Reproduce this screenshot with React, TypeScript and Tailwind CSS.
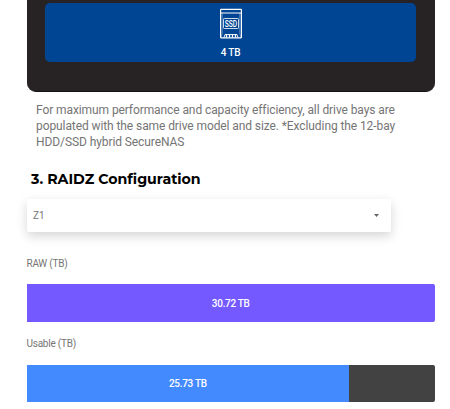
interface CapacityBarProps {
  label: string
  value: string
  percent: number
  color: string
}

function SsdIcon() {
  return (
    <svg width="22" height="31" viewBox="0 0 22 31" fill="none" stroke="white">
      <rect x="0.6" y="1.4" width="20.8" height="28.4" rx="0.5" strokeWidth="1.2" />
      <path d="M1 5h20" strokeWidth="1" />
      <path d="M2.2 5v21L1 29M19.8 5v21L21 29" strokeWidth="0.6" opacity="0.6" />
      <rect x="3.5" y="10.5" width="15" height="10" rx="0.8" strokeWidth="0.8" />
      <path d="M4 29.5l1-3h12l1 3" strokeWidth="0.9" />
      <path d="M6.5 26.5v3M9.5 26.5v3M12.5 26.5v3M15.5 26.5v3" strokeWidth="1.3" />
      <text
        x="11"
        y="18.5"
        textAnchor="middle"
        textLength="12.5"
        lengthAdjust="spacingAndGlyphs"
        fill="white"
        stroke="none"
        className="font-['Roboto',sans-serif] text-[8.6px] font-medium"
      >
        SSD
      </text>
    </svg>
  )
}

function CapacityBar({ label, value, percent, color }: CapacityBarProps) {
  return (
    <div>
      <div className="h-4 text-[10px] leading-4 tracking-[-0.24px] text-[#757575]">{label}</div>
      <div className="mt-[12.5px] h-[37.5px] w-full overflow-hidden rounded-r-[2px] bg-[#424242]">
        <div
          className={`flex h-full items-center justify-center pt-px text-[10px] font-medium tracking-[-0.3px] text-white ${color}`}
          style={{ width: `${percent}%` }}
        >
          {value}
        </div>
      </div>
    </div>
  )
}

export default function App() {
  return (
    <div className="h-[409px] w-[450px] overflow-hidden bg-white pl-[26.5px] font-['Roboto',sans-serif]">

      <div className="h-[92px] w-[408.5px] rounded-b-[9px] border-b border-[#161213] bg-[#272324] pr-[19px] pl-[18.5px] pt-[3px]">
        <div className="flex h-[59px] flex-col items-center rounded-[5px] bg-[#004593] pt-[5px] text-white">
          <SsdIcon />
          <div className="mt-[5px] text-[10px] leading-[18px] font-medium tracking-[-0.2px]">4 TB</div>
        </div>
      </div>

      <p className="mt-[10px] ml-[9.5px] w-[380px] text-[12px] leading-4 tracking-[-0.09px] text-[#757575]">
        For maximum performance and capacity efficiency, all drive bays are<br />
        populated with the same drive model and size. *Excluding the 12-bay<br />
        HDD/SSD hybrid SecureNAS
      </p>

      <h2 className="mt-[19px] ml-[4.5px] h-5 font-['Montserrat','Inter',sans-serif] text-[14.2px] leading-5 font-bold whitespace-nowrap text-black">
        3. RAIDZ Configuration
      </h2>

      <button className="mt-[10px] flex h-[33px] w-[364.5px] items-center justify-between rounded-[2px] bg-white pr-[12px] pl-[6.5px] text-[10px] text-[#757575] shadow-[0_4px_11px_rgba(0,0,0,0.17)]">
        <span>Z1</span>
        <svg width="5" height="3" viewBox="0 0 5 3" fill="#666">
          <path d="M0 0h5L2.5 3z" />
        </svg>
      </button>

      <div className="mt-[23.5px] flex w-[408.5px] flex-col gap-[14.5px]">
        <CapacityBar label="RAW (TB)" value="30.72 TB" percent={100} color="bg-[#7359ff]" />
        <CapacityBar label="Usable (TB)" value="25.73 TB" percent={79} color="bg-[#448aff]" />
      </div>
    </div>
  )
}
